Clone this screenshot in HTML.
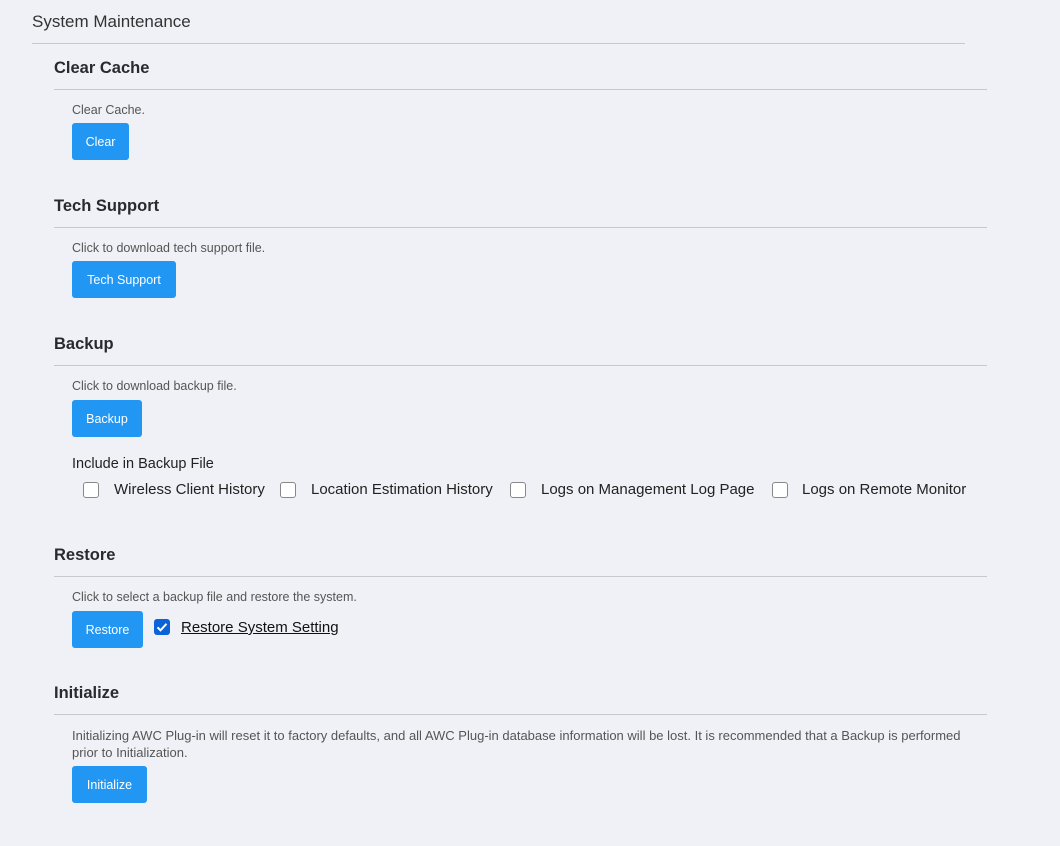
<!DOCTYPE html>
<html><head><style>
body{margin:0;width:1060px;height:846px;background:#f0f1f6;font-family:"Liberation Sans",sans-serif;position:relative;overflow:hidden}
.a{position:absolute;white-space:nowrap}
.t{left:32px;top:12px;font-size:17px;color:#333}
.h{left:54px;font-size:16.5px;font-weight:bold;color:#2a2a2e}
.l{position:absolute;height:1px;background:#c8c8cc}
.d{left:72px;font-size:12.5px;color:#555}
.b{position:absolute;left:72px;height:37px;background:#2196f3;color:#fff;font-size:12.5px;border-radius:3px;display:flex;align-items:center;justify-content:center}
.c{position:absolute;width:14px;height:14px;border:1px solid #888;border-radius:3px;background:#fff}
.lb{font-size:15px;color:#222}
</style></head><body>
<div class="a t">System Maintenance</div>
<div class="l" style="left:32px;width:933px;top:43px"></div>

<div class="a h" style="top:59px">Clear Cache</div>
<div class="l" style="left:54px;width:933px;top:89px"></div>
<div class="a d" style="top:103px">Clear Cache.</div>
<div class="b" style="top:123px;width:57px">Clear</div>

<div class="a h" style="top:197px">Tech Support</div>
<div class="l" style="left:54px;width:933px;top:227px"></div>
<div class="a d" style="top:241px">Click to download tech support file.</div>
<div class="b" style="top:261px;width:104px">Tech Support</div>

<div class="a h" style="top:335px">Backup</div>
<div class="l" style="left:54px;width:933px;top:365px"></div>
<div class="a d" style="top:379px">Click to download backup file.</div>
<div class="b" style="top:400px;width:70px">Backup</div>
<div class="a lb" style="left:72px;top:456px;font-size:14.5px">Include in Backup File</div>
<div class="c" style="left:83px;top:482px"></div><div class="a lb" style="left:114px;top:481px">Wireless Client History</div>
<div class="c" style="left:280px;top:482px"></div><div class="a lb" style="left:311px;top:481px">Location Estimation History</div>
<div class="c" style="left:510px;top:482px"></div><div class="a lb" style="left:541px;top:481px">Logs on Management Log Page</div>
<div class="c" style="left:772px;top:482px"></div><div class="a lb" style="left:802px;top:481px">Logs on Remote Monitor</div>

<div class="a h" style="top:546px">Restore</div>
<div class="l" style="left:54px;width:933px;top:576px"></div>
<div class="a d" style="top:590px">Click to select a backup file and restore the system.</div>
<div class="b" style="top:611px;width:71px">Restore</div>
<div style="position:absolute;left:154px;top:619px;width:16px;height:16px;background:#0b63d8;border-radius:3px"><svg width="16" height="16" viewBox="0 0 16 16"><path d="M3.5 8.3l3 3 6-6.5" stroke="#fff" stroke-width="2" fill="none"/></svg></div>
<div class="a lb" style="left:181px;top:619px;text-decoration:underline;color:#111">Restore System Setting</div>

<div class="a h" style="top:684px">Initialize</div>
<div class="l" style="left:54px;width:933px;top:714px"></div>
<div class="a d" style="top:727px;line-height:17px;font-size:13px">Initializing AWC Plug-in will reset it to factory defaults, and all AWC Plug-in database information will be lost. It is recommended that a Backup is performed<br>prior to Initialization.</div>
<div class="b" style="top:766px;width:75px">Initialize</div>
</body></html>
